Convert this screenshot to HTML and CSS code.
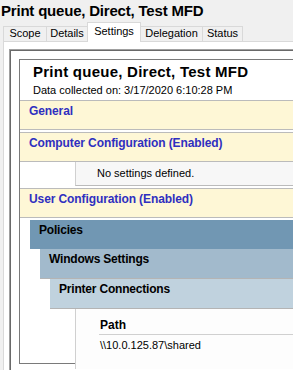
FILE: index.html
```html
<!DOCTYPE html>
<html lang="en">
<head>
  <meta charset="UTF-8" />
  <title>Print queue, Direct, Test MFD</title>
  <link rel="stylesheet" href="styles.css">
</head>
<body>

  <div class="title">Print queue, Direct, Test MFD</div>

  <div class="tabs">
    <div class="tab tab-scope">Scope</div>
    <div class="tab tab-details">Details</div>
    <div class="tab tab-settings active">Settings</div>
    <div class="tab tab-delegation">Delegation</div>
    <div class="tab tab-status">Status</div>
  </div>

  <div class="page">
    <div class="frame">
      <div class="report">

        <div class="report-head">
          <div class="report-title">Print queue, Direct, Test MFD</div>
          <div class="report-date">Data collected on: 3/17/2020 6:10:28 PM</div>
        </div>

        <div class="section">General</div>
        <div class="section tight">Computer Configuration (Enabled)</div>
        <div class="no-settings">No settings defined.</div>
        <div class="section">User Configuration (Enabled)</div>

        <div class="level level-1">Policies</div>
        <div class="level level-2">Windows Settings</div>
        <div class="level level-3">Printer Connections</div>

        <div class="table-box">
          <div class="th">Path</div>
          <div class="td">\\10.0.125.87\shared</div>
        </div>

      </div>
    </div>
  </div>

</body>
</html>
```

FILE: styles.css
```css
:root {
  --window: #f0f0f0;
  --tab-border: #d9d9d9;
  --he0: #fef7d6;
  --he0-text: #2f2fc0;
  --he0-border: #bbbbbb;
  --he1: #7197b3;
  --he2: #a2bacc;
  --he3: #c0d2de;
}

body {
  margin: 0;
  width: 293px;
  height: 370px;
  overflow: hidden;
  background-color: var(--window);
  font-family: "Liberation Sans", Arial, sans-serif;
  color: #000;
}

.title {
  height: 22px;
  box-sizing: border-box;
  padding: 1px 0 0 1px;
  font-size: 15px;
  line-height: 20px;
  font-weight: bold;
  letter-spacing: -0.2px;
  white-space: nowrap;
}

/* tab strip */
.tabs {
  display: flex;
  align-items: flex-end;
  height: 19px;
  padding-left: 4px;
}

.tab {
  box-sizing: border-box;
  height: 15px;
  margin-left: -1px;
  border: 1px solid var(--tab-border);
  border-bottom: none;
  background-color: var(--window);
  font-size: 11px;
  line-height: 13px;
  text-align: center;
  white-space: nowrap;
}

.tab-scope { width: 44px; }
.tab-details { width: 42px; }
.tab-settings { width: 54px; }
.tab-delegation { width: 63px; }
.tab-status { width: 41px; }

.tab.active {
  position: relative;
  z-index: 1;
  height: 20px;
  margin-bottom: -1px;
  background-color: #fff;
  line-height: 16px;
}

/* tab page, cut off by the window on the right and bottom */
.page {
  box-sizing: border-box;
  width: 290px;
  height: 329px;
  margin-left: 3px;
  padding: 7px 0 0 5px;
  border: 1px solid var(--tab-border);
  border-right: none;
  border-bottom: none;
  background-color: #fff;
}

.frame {
  box-sizing: border-box;
  height: 321px;
  padding: 9px 0 0 9px;
  border: 1px solid #a0a0a0;
  border-right: none;
  border-bottom: none;
  box-shadow: inset 1px 1px 0 #696969;
}

.report {
  border: 1px solid #7a7a7a;
  border-right: none;
  background-color: #fff;
}

.report-head {
  height: 40px;
  box-sizing: border-box;
  padding: 2px 0 0 13px;
  white-space: nowrap;
}

.report-title {
  font-size: 15px;
  line-height: 20px;
  font-weight: bold;
  letter-spacing: 0.25px;
}

.report-date {
  font-size: 11px;
  line-height: 14px;
  margin-top: 1px;
}

/* collapsible headers */
.section {
  height: 25px;
  margin-bottom: 2px;
  padding: 3px 0 0 9px;
  border-top: 1px solid var(--he0-border);
  border-bottom: 1px solid var(--he0-border);
  background-color: var(--he0);
  color: var(--he0-text);
  font-size: 12px;
  line-height: 15px;
  font-weight: bold;
  letter-spacing: -0.1px;
  white-space: nowrap;
}

.section.tight {
  margin-bottom: 0;
}

.no-settings {
  height: 23px;
  margin: 0 0 2px 55px;
  padding-left: 21px;
  border-left: 1px solid #d0d0d0;
  border-bottom: 1px solid var(--he0-border);
  background-color: #f7f7f7;
  font-size: 11px;
  line-height: 23px;
  white-space: nowrap;
}

.level {
  height: 26px;
  padding: 3px 0 0 9px;
  font-size: 12px;
  line-height: 15px;
  font-weight: bold;
  letter-spacing: -0.2px;
  white-space: nowrap;
}

.level-1 {
  margin-left: 10px;
  background-color: var(--he1);
}

.level-2 {
  margin-left: 20px;
  border-bottom: 1px solid #b4b4b4;
  background-color: var(--he2);
}

.level-3 {
  margin-left: 30px;
  border-bottom: 1px solid #b4b4b4;
  background-color: var(--he3);
}

/* settings table */
.table-box {
  height: 60px;
  margin: 0 0 -6px 55px;
  padding-top: 9px;
  box-sizing: border-box;
  border-left: 1px solid #d0d0d0;
  background-color: #fdfdfd;
  white-space: nowrap;
}

.th {
  margin-left: 23px;
  padding: 0 0 1px 1px;
  border-bottom: 1px solid #d0d0d0;
  font-size: 12px;
  line-height: 15px;
  font-weight: bold;
}

.td {
  margin-left: 23px;
  padding: 3px 0 0 1px;
  font-size: 11px;
  line-height: 14px;
}
```
